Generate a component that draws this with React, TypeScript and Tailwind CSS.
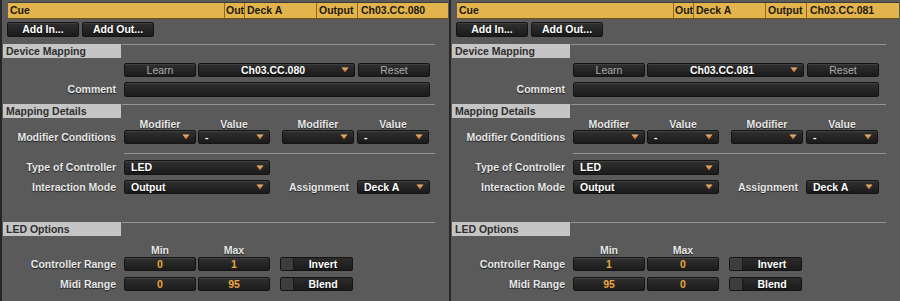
import React from "react";

const font = "[font-family:'Liberation_Sans',Arial,sans-serif]";
const shadow = "[text-shadow:0_1px_1px_rgba(0,0,0,0.7)]";

function Arrow() {
    return (
        <svg width="8" height="6" viewBox="0 0 8 6" className="shrink-0">
            <defs>
                <linearGradient id="ag" x1="0" y1="0" x2="0" y2="1">
                    <stop offset="0" stopColor="#f3b878"/>
                    <stop offset="1" stopColor="#b55e1c"/>
                </linearGradient>
            </defs>
            <path d="M0.5 0.5 H7.5 L4 5.5 Z" fill="url(#ag)"/>
        </svg>
    );
}

function Box({className = "", children}: { className?: string; children?: React.ReactNode }) {
    return (
        <div
            className={`h-[14px] rounded-[2px] border border-[#141414] bg-gradient-to-b from-[#303030] to-[#1b1b1b] shadow-[inset_0_1px_0_rgba(255,255,255,0.08)] flex items-center text-[10.5px] leading-none ${className}`}
        >
            {children}
        </div>
    );
}

function Drop({w, text, center = false}: { w: string; text?: string; center?: boolean }) {
    return (
        <Box className={`${w} pl-[6px] pr-[5px]`}>
            <span className={`flex-1 font-bold text-white ${shadow} ${center ? "text-center" : ""}`}>{text}</span>
            <Arrow/>
        </Box>
    );
}

function Label({children}: { children: React.ReactNode }) {
    return (
        <div className={`w-[115px] shrink-0 pr-[1px] text-right text-[10.5px] font-bold text-[#e8e8e8] leading-none ${shadow}`}>
            {children}
        </div>
    );
}

function Section({title, mt}: { title: string; mt: string }) {
    return (
        <div className={`flex items-start ${mt}`}>
            <div className="ml-[1px] w-[118px] h-[14px] bg-[#c5c5c5] pl-[3px] text-[10.5px] font-bold text-[#2e2e2e] leading-[14px]">
                {title}
            </div>
            <div className="ml-[1px] mr-[14px] flex-1 h-[1px] bg-[#959595]"/>
        </div>
    );
}

function Toggle({text}: { text: string }) {
    return (
        <div className="w-[73px] h-[14px] rounded-[2px] border border-[#141414] bg-gradient-to-b from-[#2c2c2c] to-[#1b1b1b] flex overflow-hidden">
            <div className="w-[13px] h-full bg-[#3d3d3d] border-r border-[#1a1a1a]"/>
            <div className={`flex-1 flex items-center justify-center text-[10.5px] font-bold text-white leading-none ${shadow}`}>
                {text}
            </div>
        </div>
    );
}

function Panel({cc, ctrl, midi, w}: { cc: string; ctrl: [string, string]; midi: [string, string]; w: string }) {
    return (
        <div className={`${w} h-[301px] shrink-0 border-l-2 border-[#262626] bg-[#5a5a5a] ${font}`}>
            {/* barre jaune */}
            <div className="h-[19px] pt-[2px] bg-[#5a5a5a]">
                <div className="ml-[6px] mr-[1px] h-[17px] flex bg-[#e3b44b] border-t border-[#3a3a3a] border-b border-b-[#6b5218] text-[10.5px] font-bold text-[#1d1910] leading-[15px]">
                    <div className="w-[217px] pl-[2px] border-r border-[#8a6a26]">Cue</div>
                    <div className="w-[20px] pl-[1px] border-r border-[#8a6a26]">Out</div>
                    <div className="w-[72px] pl-[2px] border-r border-[#8a6a26]">Deck A</div>
                    <div className="w-[41px] pl-[2px] border-r border-[#8a6a26]">Output</div>
                    <div className="flex-1 pl-[3px]">{cc}</div>
                </div>
            </div>

            {/* boutons */}
            <div className="flex gap-[3px] ml-[5px] mt-[3px]">
                <Box className={`w-[72px] h-[15px] justify-center font-bold text-white ${shadow}`}>Add In...</Box>
                <Box className={`w-[72px] h-[15px] justify-center font-bold text-white ${shadow}`}>Add Out...</Box>
            </div>

            <Section title="Device Mapping" mt="mt-[7px]"/>

            <div className="flex items-center mt-[5px]">
                <div className="w-[122px] shrink-0"/>
                <Box className="w-[72px] justify-center text-[#ababab]">Learn</Box>
                <Drop w="w-[157px] ml-[2px]" text={cc} center/>
                <Box className="w-[72px] ml-[3px] justify-center text-[#ababab]">Reset</Box>
            </div>

            <div className="flex items-center mt-[5px]">
                <Label>Comment</Label>
                <Box className="ml-[7px] w-[306px] h-[15px]"/>
            </div>

            <Section title="Mapping Details" mt="mt-[7px]"/>

            <div className={`flex h-[11px] items-end text-[10.5px] font-bold text-[#e8e8e8] leading-none ${shadow}`}>
                <div className="w-[122px] shrink-0"/>
                <div className="w-[72px] text-center">Modifier</div>
                <div className="w-[72px] ml-[2px] text-center">Value</div>
                <div className="w-[72px] ml-[12px] text-center">Modifier</div>
                <div className="w-[72px] ml-[3px] text-center">Value</div>
            </div>

            <div className="flex items-center mt-[1px]">
                <Label>Modifier Conditions</Label>
                <div className="ml-[7px] flex">
                    <Drop w="w-[72px]"/>
                    <Drop w="w-[72px] ml-[2px]" text="-"/>
                    <Drop w="w-[72px] ml-[12px]"/>
                    <Drop w="w-[72px] ml-[3px]" text="-"/>
                </div>
            </div>

            <div className="ml-[122px] mr-[14px] mt-[9px] h-[1px] bg-[#959595]"/>

            <div className="flex items-center mt-[6px]">
                <Label>Type of Controller</Label>
                <Drop w="ml-[7px] w-[146px] h-[15px]" text="LED"/>
            </div>

            <div className="flex items-center mt-[5px]">
                <Label>Interaction Mode</Label>
                <Drop w="ml-[7px] w-[146px]" text="Output"/>
                <div className={`w-[87px] pr-[8px] text-right text-[10.5px] font-bold text-[#e8e8e8] leading-none ${shadow}`}>
                    Assignment
                </div>
                <Drop w="w-[73px]" text="Deck A"/>
            </div>

            <Section title="LED Options" mt="mt-[28px]"/>

            <div className={`flex h-[12px] mt-[8px] items-center text-[10.5px] font-bold text-[#e8e8e8] leading-none ${shadow}`}>
                <div className="w-[122px] shrink-0"/>
                <div className="w-[72px] text-center">Min</div>
                <div className="w-[72px] ml-[2px] text-center">Max</div>
            </div>

            <div className="flex items-center mt-[1px]">
                <Label>Controller Range</Label>
                <Box className="ml-[7px] w-[72px] justify-center font-bold text-[#e9a53e]">{ctrl[0]}</Box>
                <Box className="ml-[2px] w-[72px] justify-center font-bold text-[#e9a53e]">{ctrl[1]}</Box>
                <div className="ml-[10px]"><Toggle text="Invert"/></div>
            </div>

            <div className="flex items-center mt-[6px]">
                <Label>Midi Range</Label>
                <Box className="ml-[7px] w-[72px] justify-center font-bold text-[#e9a53e]">{midi[0]}</Box>
                <Box className="ml-[2px] w-[72px] justify-center font-bold text-[#e9a53e]">{midi[1]}</Box>
                <div className="ml-[10px]"><Toggle text="Blend"/></div>
            </div>
        </div>
    );
}

export default function App() {
    return (
        <div className="flex w-[900px] h-[301px] overflow-hidden bg-[#5a5a5a]">
            <Panel w="w-[449px]" cc="Ch03.CC.080" ctrl={["0", "1"]} midi={["0", "95"]}/>
            <Panel w="w-[451px]" cc="Ch03.CC.081" ctrl={["1", "0"]} midi={["95", "0"]}/>
        </div>
    );
}
